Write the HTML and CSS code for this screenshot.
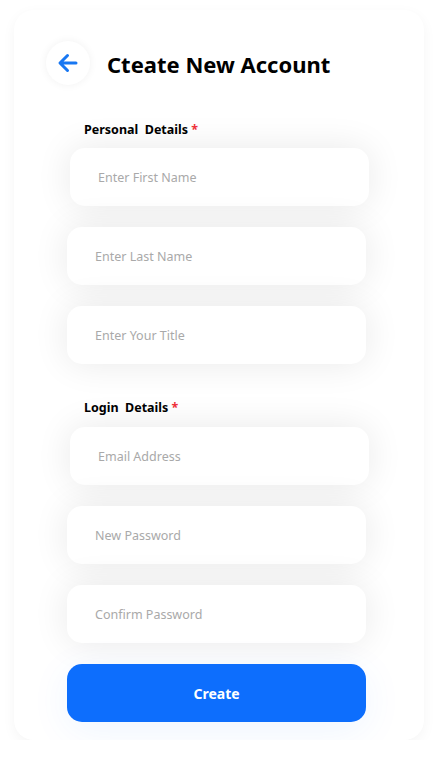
FILE: index.html
```html
<!DOCTYPE html>
<html>
<head>
<meta charset="utf-8">
<link rel="stylesheet" href="styles.css">
</head>
<body>
<div class="card">
  <div class="header">
    <button class="back" aria-label="Back">
      <svg width="22" height="22" viewBox="0 0 22 22"><path d="M19 11H3.5M10.5 3.5L3 11l7.5 7.5" fill="none" stroke="#1877f2" stroke-width="3" stroke-linecap="round" stroke-linejoin="round"/></svg>
    </button>
    <h1 class="title">Cteate New Account</h1>
  </div>
  <form class="form">
    <div class="label">Personal&nbsp; Details <span class="req">*</span></div>
    <div class="field field--first field--shift">Enter First Name</div>
    <div class="field">Enter Last Name</div>
    <div class="field">Enter Your Title</div>
    <div class="label label--login">Login&nbsp; Details <span class="req">*</span></div>
    <div class="field field--login field--shift">Email Address</div>
    <div class="field">New Password</div>
    <div class="field">Confirm Password</div>
    <button type="button" class="create">Create</button>
  </form>
</div>
</body>
</html>
```
FILE: styles.css
```css
html, body {
  margin: 0;
  padding: 0;
  background: #ffffff;
  font-family: "Noto Sans", "Open Sans", sans-serif;
}
.card {
  box-sizing: border-box;
  margin: 10px 0 0 14px;
  width: 410px;
  height: 730px;
  border-radius: 20px;
  background: #ffffff;
  box-shadow: 0 4px 14px rgba(0, 0, 0, 0.045);
  padding: 31px 0 0 32px;
}
.header {
  display: flex;
  align-items: center;
  gap: 17px;
}
.back {
  width: 44px;
  height: 44px;
  border: none;
  border-radius: 50%;
  background: #ffffff;
  box-shadow: 0 0 8px rgba(0, 0, 0, 0.06);
  display: flex;
  align-items: center;
  justify-content: center;
  padding: 0;
  margin: 0;
}
.title {
  margin: 2px 0 0 0;
  font-size: 22px;
  font-weight: 700;
  color: #000;
  letter-spacing: 0;
}
.form {
  margin: 0 0 0 21px;
  width: 299px;
  display: flex;
  flex-direction: column;
}
.label {
  font-size: 12.5px;
  font-weight: 700;
  color: #000;
  margin: 36px 0 0 17px;
  height: 18px;
  line-height: 18px;
}
.label--login {
  margin-top: 35px;
}
.req {
  color: #f0313a;
}
.field {
  box-sizing: border-box;
  height: 58px;
  border-radius: 15px;
  background: #ffffff;
  box-shadow: 0 0 36px rgba(0, 0, 0, 0.09);
  display: flex;
  align-items: center;
  padding-left: 28px;
  font-size: 12.5px;
  color: #a9a9a9;
  margin-top: 21px;
}
.field--first {
  margin-top: 9px;
}
.field--login {
  margin-top: 10px;
}
.field--shift {
  margin-left: 3px;
  margin-right: -3px;
}
.create {
  margin-top: 21px;
  height: 58px;
  border: none;
  border-radius: 15px;
  background: #0d6efd;
  color: #fff;
  font-family: inherit;
  font-size: 14px;
  font-weight: 700;
  box-shadow: 0 8px 40px rgba(13, 110, 253, 0.07);
}
```
